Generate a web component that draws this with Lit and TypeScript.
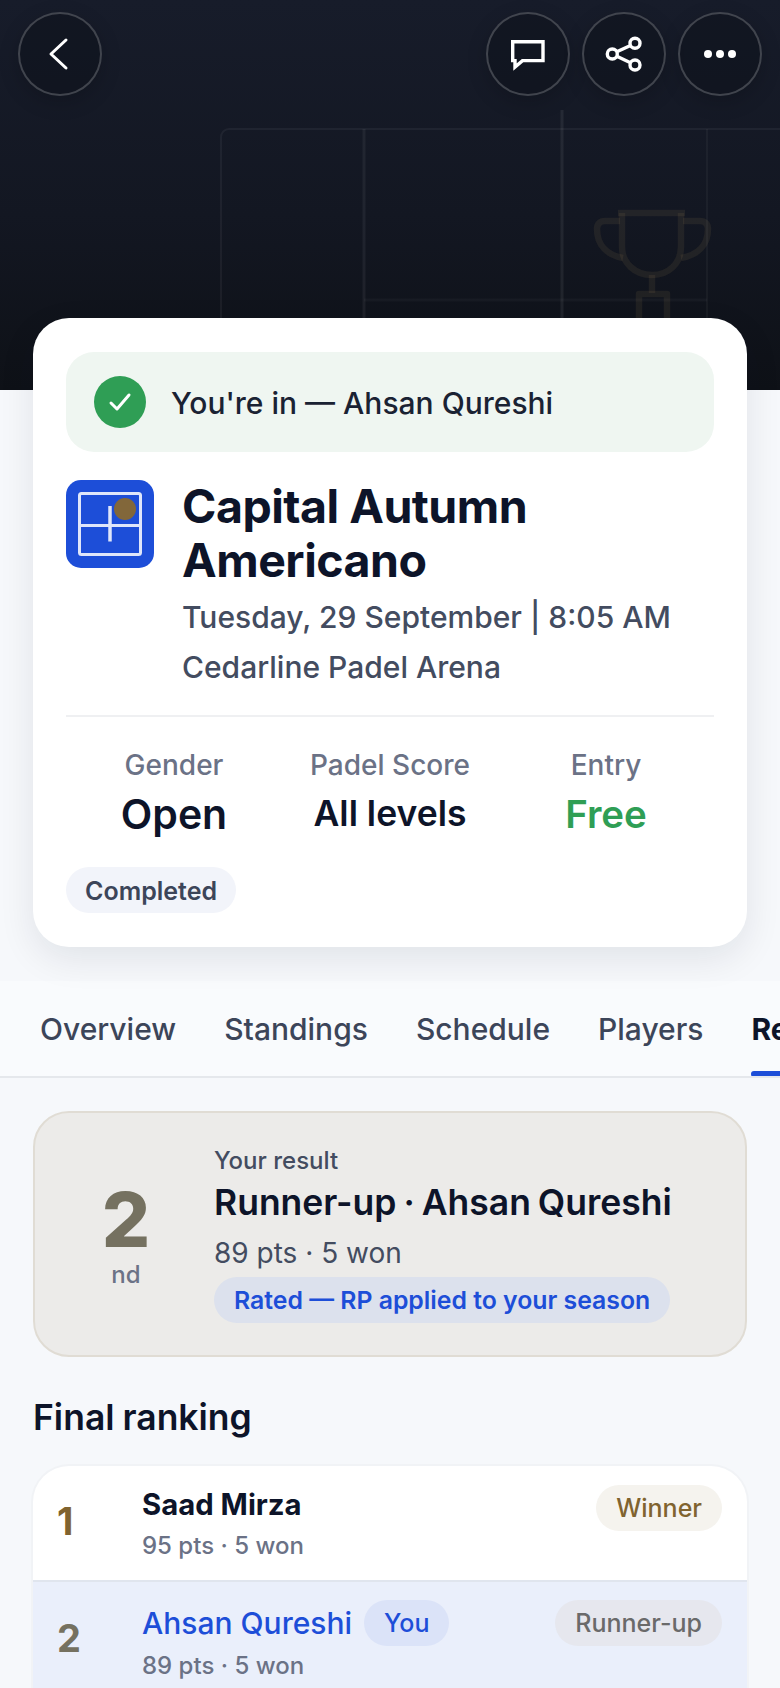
import { LitElement, html, css, svg } from "lit";
import { customElement } from "lit/decorators.js";

@customElement("app-root")
export class AppRoot extends LitElement {
  static styles = css`
    :host { display: block; width: 780px; height: 1688px; overflow: hidden; background: #f6f8fb; font-family: Inter, "Noto Sans", sans-serif; color: #0f172a; }
    .hero { position: relative; height: 390px; background: linear-gradient(180deg, #171c2a 0%, #131722 55%, #0e1117 100%); overflow: hidden; }
    .deco { position: absolute; inset: 0; filter: blur(0.7px); }
    .nav { position: relative; display: flex; justify-content: space-between; padding: 12px 18px 0; }
    .nav-r { display: flex; gap: 12px; }
    .btn { box-sizing: border-box; width: 84px; height: 84px; border-radius: 50%; border: 2px solid rgba(255,255,255,.2); background: rgba(15,18,28,.55); box-shadow: 0 6px 20px rgba(0,0,0,.18); display: flex; align-items: center; justify-content: center; }
    .card { position: relative; box-sizing: border-box; margin: -72px 33px 0; height: 629px; background: #fff; border-radius: 36px; padding: 34px 33px 0; box-shadow: 0 12px 36px rgba(15,23,42,.09); }
    .banner { height: 100px; box-sizing: border-box; border-radius: 28px; background: #eff6f1; display: flex; align-items: center; gap: 25px; padding-left: 28px; font-size: 30px; font-weight: 500; color: #1a2233; }
    .banner span { padding-top: 2px; }
    .check { width: 52px; height: 52px; border-radius: 50%; background: #2f9e55; display: flex; align-items: center; justify-content: center; }
    .head { display: flex; gap: 28px; margin-top: 27px; }
    .logo { flex: none; width: 88px; height: 88px; margin-top: 1px; }
    .title { font-size: 46.500px; line-height: 54px; font-weight: 700; letter-spacing: -0.5px; color: #0d1429; }
    .meta { font-size: 30px; font-weight: 500; line-height: 50px; color: #434c60; }
    .title + .meta { margin-top: 5px; }
    .divider { height: 2px; background: #eff0f2; margin-top: 23px; }
    .stats { display: grid; grid-template-columns: 216px 216px 216px; margin-top: 30px; text-align: center; }
    .lbl { font-size: 28px; font-weight: 500; line-height: 36px; color: #6b7286; }
    .val { font-size: 41px; line-height: 50px; font-weight: 600; margin-top: 6px; color: #0d1429; }
    .val.sm { font-size: 35.500px; }
    .val.free { color: #2f9e55; font-size: 38.500px; }
    .status { display: inline-block; margin-top: 28px; height: 46px; line-height: 48px; padding: 0 19px; border-radius: 23px; background: #f2f4fa; font-size: 25px; font-weight: 600; color: #3c4559; }
    .tabs { margin-top: 34px; height: 97px; box-sizing: border-box; background: #f9fbfd; border-bottom: 2px solid #e5e8ec; display: flex; gap: 48px; padding: 0 0 0 40px; overflow: hidden; }
    .tab { position: relative; flex: none; font-size: 30px; font-weight: 500; line-height: 96px; color: #3c4559; height: 95px; }
    .tab.on { font-weight: 700; color: #0d1429; }
    .tab.on::after { content: ""; position: absolute; left: 0; right: 0; bottom: -1px; height: 6px; border-radius: 3px; background: #1d4ed8; }
    .result { box-sizing: border-box; margin: 33px 33px 0; height: 246px; border: 2px solid #e0dcd4; border-radius: 36px; background: #ecebe9; display: flex; align-items: center; }
    .place { width: 179px; flex: none; text-align: center; padding-left: 3px; box-sizing: border-box; }
    .big { font-size: 76px; line-height: 76px; font-weight: 800; color: #757160; padding-top: 3px; }
    .nd { font-size: 24px; line-height: 30px; font-weight: 500; color: #6b7286; margin-top: 3px; }
    .rtxt { display: flex; flex-direction: column; align-items: flex-start; }
    .r1 { font-size: 24px; line-height: 30px; font-weight: 500; color: #434c60; }
    .r2 { font-size: 35.500px; line-height: 48px; font-weight: 600; word-spacing: -2px; color: #0d1429; margin-top: 3px; }
    .r3 { font-size: 28px; line-height: 40px; color: #434c60; margin-top: 6px; }
    .rated { height: 46px; line-height: 46px; padding: 0 20px; border-radius: 23px; background: #dce1ed; color: #1d4ed8; font-size: 24.800px; font-weight: 600; margin-top: 4px; }
    h2 { margin: 39px 33px 0; font-size: 35.500px; line-height: 44px; font-weight: 600; word-spacing: -1px; color: #0d1429; }
    .list { margin: 26px 33px 0; border-radius: 36px 36px 0 0; background: #fff; box-shadow: 0 0 0 2px #f1f3f6; }
    .row { position: relative; display: flex; height: 114px; box-sizing: border-box; padding: 16px 25px 0 24px; }
    .row.me { background: #eaeffb; border-top: 2px solid #e0e5ee; height: 130px; padding-top: 18px; }
    .rk { width: 85px; flex: none; font-size: 38px; font-weight: 700; line-height: 78px; }
    .rk.gold { color: #80632f; }
    .rk.sil { color: #757160; line-height: 76px; }
    .who { flex: 1; }
    .nm { font-size: 29.300px; line-height: 40px; font-weight: 700; color: #0d1429; display: flex; align-items: center; gap: 12px; height: 46px; }
    .me .nm { font-size: 30px; font-weight: 500; color: #1d4ed8; }
    .sub { font-size: 24px; line-height: 34px; font-weight: 500; color: #6b7286; margin-top: 1px; }
    .me .sub { margin-top: 3px; }
    .pill { height: 46px; line-height: 46px; padding: 0 20px; border-radius: 23px; font-size: 25px; font-weight: 500; }
    .you { background: #dbe3f8; color: #1d4ed8; }
    .win { background: #f5f3ee; color: #80632f; margin-top: 3px; }
    .run { background: #e6e7ee; color: #6a6a6a; }
  `;

  render() {
    return html`
      <div class="hero">
        <svg class="deco" width="780" height="390" viewBox="0 0 780 390" fill="none">
          ${svg`
            <path d="M221 400V137a8 8 0 0 1 8-8H790" stroke="rgba(255,255,255,.05)" stroke-width="2"/>
            <path d="M364 129V400" stroke="rgba(255,255,255,.06)" stroke-width="3"/>
            <path d="M707 129V400" stroke="rgba(255,255,255,.04)" stroke-width="2"/>
            <path d="M562 110V400" stroke="rgba(255,255,255,.07)" stroke-width="3"/>
            <path d="M364 300H707" stroke="rgba(255,255,255,.03)" stroke-width="3"/>
            <g stroke="rgba(214,178,110,.085)" stroke-width="6.500" stroke-linejoin="round">
              <path d="M618 213H685"/>
              <path d="M622 213V247C622 263 635 275 652 275C669 275 681 263 681 247V213"/>
              <path d="M620 221H605C600 221 597 224 597 229C597 245 607 255 623 258"/>
              <path d="M683 221H700C705 221 708 224 708 229C708 245 698 255 681 258"/>
              <path d="M652 275V293"/>
              <path d="M639 318V294H667V318"/>
            </g>
          `}
        </svg>
        <div class="nav">
          <div class="btn">
            <svg width="40" height="40" viewBox="0 0 40 40" fill="none"><path d="M26 6L11 20L26 34" stroke="#fff" stroke-width="3" stroke-linecap="round" stroke-linejoin="round"/></svg>
          </div>
          <div class="nav-r">
            <div class="btn">
              <svg width="44" height="44" viewBox="0 0 44 44" fill="none"><path d="M6.700 9.700H37V28.600H16.500L9 35V28.600H6.700z" stroke="#fff" stroke-width="3.400"/></svg>
            </div>
            <div class="btn">
              <svg width="44" height="44" viewBox="0 0 44 44" fill="none" stroke="#fff" stroke-width="3.400"><circle cx="33" cy="11.300" r="5"/><circle cx="33" cy="33" r="5"/><circle cx="10.300" cy="22" r="5"/><path d="M14.800 19.800L28.500 13.500M14.800 24.200L28.500 30.800"/></svg>
            </div>
            <div class="btn">
              <svg width="44" height="44" viewBox="0 0 44 44" fill="#fff"><circle cx="10" cy="22" r="4"/><circle cx="22" cy="22" r="4"/><circle cx="34" cy="22" r="4"/></svg>
            </div>
          </div>
        </div>
      </div>

      <div class="card">
        <div class="banner">
          <div class="check">
            <svg width="28" height="28" viewBox="0 0 28 28" fill="none"><path d="M5 15l6 6L23 7" stroke="#fff" stroke-width="3" stroke-linecap="round" stroke-linejoin="round"/></svg>
          </div>
          <span>You're in — Ahsan Qureshi</span>
        </div>
        <div class="head">
          <svg class="logo" viewBox="0 0 88 88" fill="none">
            <rect width="88" height="88" rx="15" fill="#1d4ed8"/>
            <rect x="13.500" y="13.500" width="61" height="61" rx="2" stroke="#dfe6fa" stroke-width="3"/>
            <path d="M13 45.500H75" stroke="#dfe6fa" stroke-width="3"/>
            <path d="M44 26V61.500" stroke="#dfe6fa" stroke-width="3.500"/>
            <circle cx="59" cy="29" r="11" fill="#82673a"/>
          </svg>
          <div>
            <div class="title">Capital Autumn<br />Americano</div>
            <div class="meta">Tuesday, 29 September | 8:05 AM</div>
            <div class="meta">Cedarline Padel Arena</div>
          </div>
        </div>
        <div class="divider"></div>
        <div class="stats">
          <div><div class="lbl">Gender</div><div class="val">Open</div></div>
          <div><div class="lbl">Padel Score</div><div class="val sm">All levels</div></div>
          <div><div class="lbl">Entry</div><div class="val free">Free</div></div>
        </div>
        <div class="status">Completed</div>
      </div>

      <div class="tabs">
        <div class="tab">Overview</div>
        <div class="tab">Standings</div>
        <div class="tab">Schedule</div>
        <div class="tab">Players</div>
        <div class="tab on">Results</div>
      </div>

      <div class="result">
        <div class="place"><div class="big">2</div><div class="nd">nd</div></div>
        <div class="rtxt">
          <div class="r1">Your result</div>
          <div class="r2">Runner-up · Ahsan Qureshi</div>
          <div class="r3">89 pts · 5 won</div>
          <div class="rated">Rated — RP applied to your season</div>
        </div>
      </div>

      <h2>Final ranking</h2>
      <div class="list">
        <div class="row">
          <div class="rk gold">1</div>
          <div class="who"><div class="nm">Saad Mirza</div><div class="sub">95 pts · 5 won</div></div>
          <div class="pill win">Winner</div>
        </div>
        <div class="row me">
          <div class="rk sil">2</div>
          <div class="who"><div class="nm">Ahsan Qureshi <span class="pill you">You</span></div><div class="sub">89 pts · 5 won</div></div>
          <div class="pill run">Runner-up</div>
        </div>
      </div>
    `;
  }
}
